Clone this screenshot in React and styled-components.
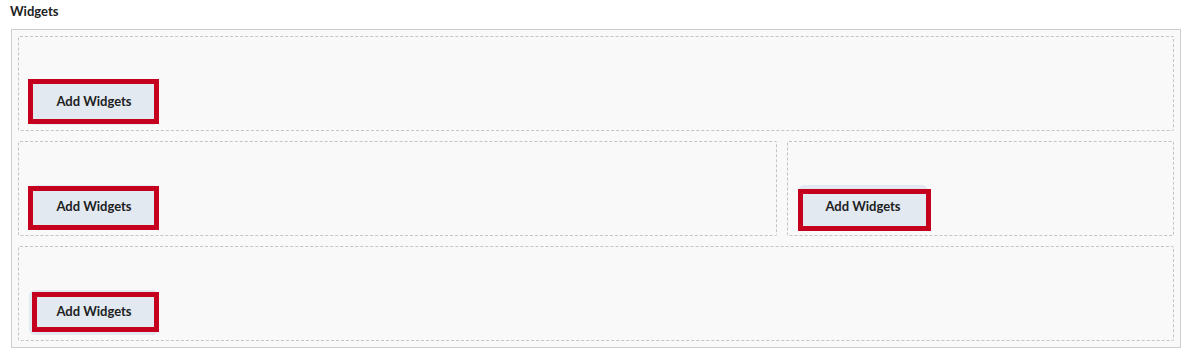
import styled, { createGlobalStyle } from "styled-components";

const GlobalStyle = createGlobalStyle`
  body {
    margin: 0;
    background: #ffffff;
    font-family: Lato, "Open Sans", sans-serif;
  }
`;

// red marks that sit over each button (annotation boxes)
const rows = [
  [{ mark: { top: -1, right: 0, bottom: 1, left: -1 } }],
  [
    { mark: { top: 1, right: 0, bottom: 0, left: -1 } },
    { mark: { top: 4, right: -3, bottom: -1, left: 0 } },
  ],
  [{ mark: { top: 2, right: 0, bottom: 3, left: 3 } }],
];

function App() {
  return (
    <>
      <GlobalStyle />
      <Page>
        <Title>Widgets</Title>
        <Layout>
          {rows.map((row, i) => (
            <Row key={i} $split={row.length > 1}>
              {row.map((panel, j) => (
                <Panel key={j}>
                  <ButtonWrap>
                    <AddButton type="button">Add Widgets</AddButton>
                    <Mark
                      $top={panel.mark.top}
                      $right={panel.mark.right}
                      $bottom={panel.mark.bottom}
                      $left={panel.mark.left}
                    />
                  </ButtonWrap>
                </Panel>
              ))}
            </Row>
          ))}
        </Layout>
      </Page>
    </>
  );
}

const Page = styled.div`
  width: 1191px;
  height: 358px;
  box-sizing: border-box;
`;

const Title = styled.h2`
  margin: 0;
  height: 29px;
  box-sizing: border-box;
  padding: 1px 10px 0;
  font-size: 13px;
  line-height: 20px;
  font-weight: 700;
  color: #202122;
`;

const Layout = styled.div`
  margin-left: 11px;
  width: 1170px;
  box-sizing: border-box;
  border: 1px solid #cdcdcd;
  background: #f9f9f9;
  padding: 6px;
  display: flex;
  flex-direction: column;
  gap: 10px;
`;

const Row = styled.div`
  display: grid;
  grid-template-columns: ${p => (p.$split ? "minmax(0, 759fr) minmax(0, 387fr)" : "1fr")};
  gap: 10px;
`;

const Panel = styled.div`
  height: 95px;
  box-sizing: border-box;
  border: 1px dashed #c4c4c4;
  border-radius: 2px;
  background: #f9f9f9;
  padding: 0 10px 5px;
  display: flex;
  align-items: flex-end;
`;

const ButtonWrap = styled.div`
  position: relative;
`;

const AddButton = styled.button`
  display: block;
  width: 130px;
  height: 45px;
  padding: 0 0 4px;
  border: none;
  border-radius: 6px;
  background: #e3e9f1;
  color: #202122;
  font-family: Lato, "Open Sans", sans-serif;
  font-size: 13px;
  font-weight: 700;
  cursor: pointer;
`;

const Mark = styled.span`
  position: absolute;
  top: ${p => p.$top}px;
  right: ${p => p.$right}px;
  bottom: ${p => p.$bottom}px;
  left: ${p => p.$left}px;
  border: 5px solid #c5001e;
  pointer-events: none;
`;

export default App;
